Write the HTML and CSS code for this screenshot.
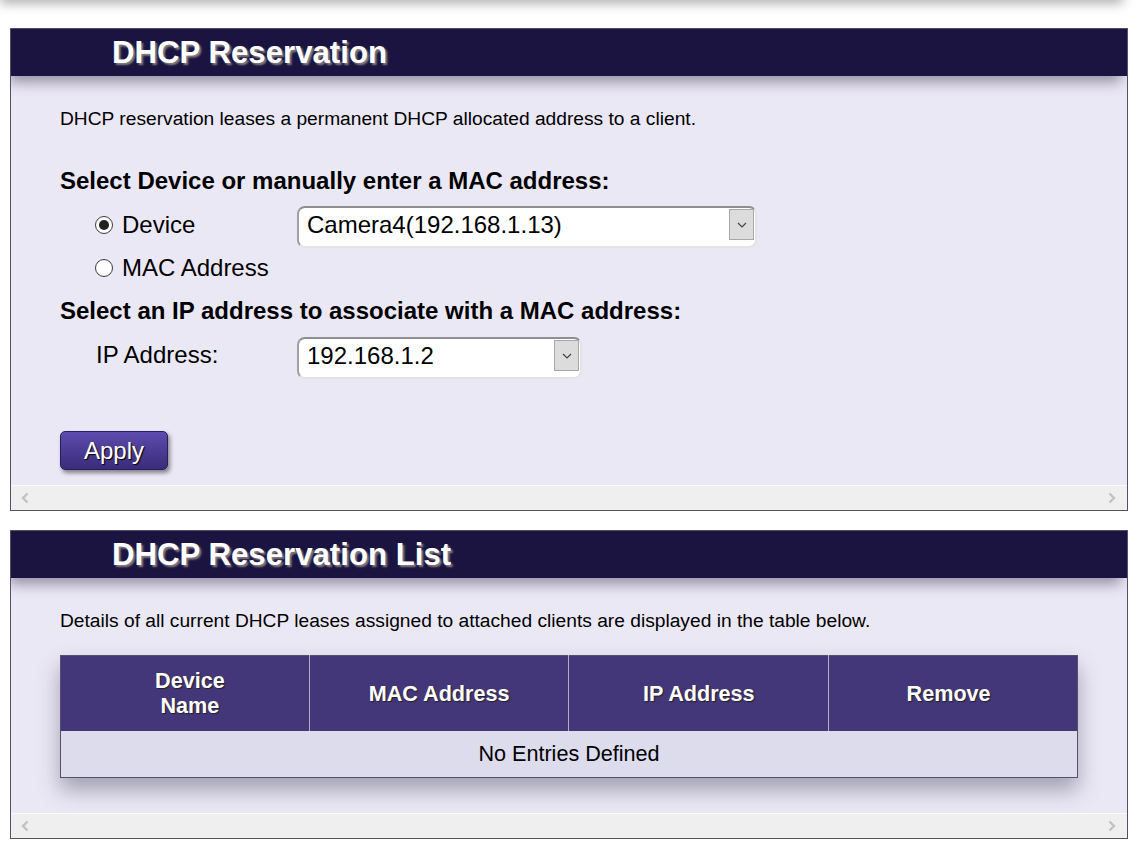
FILE: index.html
```html
<!DOCTYPE html>
<html>
<head>
<meta charset="utf-8">
<title>DHCP Reservation</title>
<link rel="stylesheet" href="styles.css">
</head>
<body>
<div class="top-shade"></div>
<div class="page">

    <!-- DHCP Reservation -->
    <div class="panel">
        <div class="panel-header">DHCP Reservation</div>
        <div class="panel-body">
            <p class="intro">DHCP reservation leases a permanent DHCP allocated address to a client.</p>

            <h3 class="section-title">Select Device or manually enter a MAC address:</h3>
            <div class="form-row">
                <label class="field-label"><span class="radio checked"></span>Device</label>
                <div class="select wide">
                    <span class="select-value">Camera4(192.168.1.13)</span>
                    <span class="select-arrow">
                        <svg width="10" height="6" viewBox="0 0 10 6"><polyline points="1,1 5,5 9,1" fill="none" stroke="#444" stroke-width="1.2"/></svg>
                    </span>
                </div>
            </div>
            <div class="form-row short">
                <label class="field-label"><span class="radio"></span>MAC Address</label>
            </div>

            <h3 class="section-title second">Select an IP address to associate with a MAC address:</h3>
            <div class="form-row">
                <span class="field-label plain">IP Address:</span>
                <div class="select narrow">
                    <span class="select-value">192.168.1.2</span>
                    <span class="select-arrow">
                        <svg width="10" height="6" viewBox="0 0 10 6"><polyline points="1,1 5,5 9,1" fill="none" stroke="#444" stroke-width="1.2"/></svg>
                    </span>
                </div>
            </div>

            <div class="button-row">
                <button class="btn-apply">Apply</button>
            </div>
        </div>
        <div class="hscroll">
            <svg width="8" height="12" viewBox="0 0 8 12"><polyline points="6.5,1.5 2,6 6.5,10.5" fill="none" stroke="#c2c2c2" stroke-width="2.4"/></svg>
            <svg width="8" height="12" viewBox="0 0 8 12"><polyline points="1.5,1.5 6,6 1.5,10.5" fill="none" stroke="#c2c2c2" stroke-width="2.4"/></svg>
        </div>
    </div>

    <!-- DHCP Reservation List -->
    <div class="panel">
        <div class="panel-header">DHCP Reservation List</div>
        <div class="panel-body list-body">
            <p class="intro">Details of all current DHCP leases assigned to attached clients are displayed in the table below.</p>

            <table class="lease-table">
                <thead>
                    <tr>
                        <th class="col-first">Device<br>Name</th>
                        <th class="col-mid">MAC Address</th>
                        <th class="col-mid">IP Address</th>
                        <th class="col-last">Remove</th>
                    </tr>
                </thead>
                <tbody>
                    <tr>
                        <td colspan="4">No Entries Defined</td>
                    </tr>
                </tbody>
            </table>
        </div>
        <div class="hscroll">
            <svg width="8" height="12" viewBox="0 0 8 12"><polyline points="6.5,1.5 2,6 6.5,10.5" fill="none" stroke="#c2c2c2" stroke-width="2.4"/></svg>
            <svg width="8" height="12" viewBox="0 0 8 12"><polyline points="1.5,1.5 6,6 1.5,10.5" fill="none" stroke="#c2c2c2" stroke-width="2.4"/></svg>
        </div>
    </div>

</div>
</body>
</html>
```

FILE: styles.css
```css
/* Reset */
* { margin: 0; padding: 0; box-sizing: border-box; }

body {
    background: #fff;
    font-family: "Liberation Sans", Arial, sans-serif;
    color: #000;
    overflow: hidden;
}

/* shadow of the bar above the page */
.top-shade {
    height: 12px;
    margin: -12px 14px 0 0;
    background: #fff;
    box-shadow: 0 3px 12px rgba(0, 0, 0, 0.35);
}

.page {
    padding: 28px 9px 0 10px;
    display: flex;
    flex-direction: column;
    gap: 19px;
}

/* Panels */
.panel {
    border: 1px solid #574e6e;
    background: #ebe8f6;
    overflow: hidden;
}

.panel-header {
    position: relative;
    z-index: 2;
    height: 47px;
    padding-left: 101px;
    background: #1b1440;
    color: #fff;
    font-size: 31.2px;
    font-weight: bold;
    line-height: 47px;
    text-shadow: 2px 2px 2px #8a8080;
    box-shadow: -4px 8px 14px -2px rgba(40, 34, 60, 0.45);
}

.panel-body {
    padding: 32px 49px 15px 49px;
}

.intro {
    font-size: 19.2px;
    line-height: 22px;
}

.section-title {
    margin-top: 37px;
    font-size: 24px;
    line-height: 28px;
    font-weight: bold;
}

.section-title.second {
    margin-top: 15px;
}

/* Form rows */
.form-row {
    display: flex;
    align-items: flex-start;
    padding-left: 35px;
    margin-top: 11px;
    min-height: 42px;
}

.form-row.short {
    margin-top: 6px;
    min-height: 28px;
}

.section-title.second + .form-row {
    margin-top: 12px;
}

.field-label {
    width: 202px;
    margin-top: 5px;
    display: flex;
    align-items: center;
    font-size: 24px;
    line-height: 28px;
}

.form-row.short .field-label {
    margin-top: 0;
}

.field-label.plain {
    padding-left: 1px;
    margin-top: 4px;
}

.radio {
    width: 18px;
    height: 18px;
    margin-right: 9px;
    border: 1px solid #3c3c3c;
    border-radius: 50%;
    background: #fff;
    display: flex;
    align-items: center;
    justify-content: center;
}

.radio.checked::after {
    content: "";
    width: 10px;
    height: 10px;
    border-radius: 50%;
    background: #222;
}

/* Drop down */
.select {
    height: 42px;
    display: flex;
    align-items: flex-start;
    justify-content: space-between;
    background: #fff;
    border: 2px solid #e4e4e4;
    border-top-color: #8f8f8f;
    border-left-color: #a0a0a0;
    border-radius: 8px;
    padding: 1px 1px 0 8px;
}

.select.wide { width: 460px; }
.select.narrow { width: 285px; }

.select-value {
    font-size: 24px;
    line-height: 31px;
}

.select-arrow {
    width: 25px;
    height: 31px;
    background: #dcdcdc;
    border: 1px solid #a8a8a8;
    display: flex;
    align-items: center;
    justify-content: center;
}

/* Apply */
.button-row {
    margin-top: 52px;
}

.btn-apply {
    width: 108px;
    height: 39px;
    border: 1px solid #2a1f58;
    border-radius: 5px;
    background: linear-gradient(#5d4cae, #3b2b7a);
    color: #fff;
    font-family: "Liberation Sans", Arial, sans-serif;
    font-size: 24px;
    text-shadow: 1px 1px 1px #000;
    box-shadow: 2px 3px 4px rgba(0, 0, 0, 0.45);
    cursor: pointer;
}

/* fake horizontal scroller */
.hscroll {
    height: 25px;
    background: #efefef;
    border-top: 1px solid #fafafa;
    display: flex;
    align-items: center;
    justify-content: space-between;
    padding: 0 11px 0 10px;
}

/* Reservation list */
.list-body {
    padding-bottom: 35px;
}

.lease-table {
    width: 100%;
    margin-top: 23px;
    border-collapse: collapse;
    border: 1px solid #574e6e;
    box-shadow: 0 12px 20px rgba(30, 25, 50, 0.35);
}

.lease-table th {
    height: 75px;
    background: #433679;
    color: #fff;
    font-size: 21.6px;
    line-height: 25px;
    font-weight: bold;
    text-shadow: 1px 1px 1px #222;
    border-left: 1px solid #b4b0c4;
}

.lease-table th:first-child { border-left: 0; }

.col-first { width: 249px; padding-left: 10px; }
.col-mid { width: 260px; }
.col-last { width: 249px; padding-right: 9px; }

.lease-table td {
    height: 47px;
    background: #dddcec;
    text-align: center;
    font-size: 21.6px;
}
```
